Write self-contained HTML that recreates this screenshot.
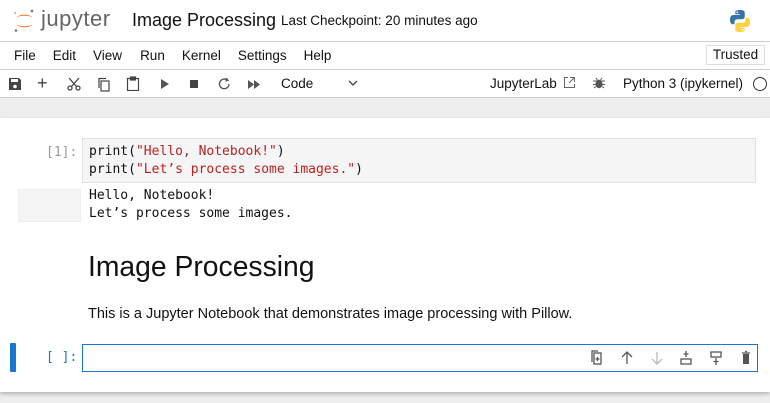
<!DOCTYPE html>
<html><head><style>
*{margin:0;padding:0;box-sizing:border-box}
body{width:770px;height:403px;overflow:hidden;background:#eee;font-family:"Liberation Sans",sans-serif;color:#111;position:relative}
.abs{position:absolute}
.mono{font-family:"DejaVu Sans Mono","Liberation Mono",monospace;font-size:13px}
.ic{position:absolute;top:77px}
</style></head><body>
<div class="abs" style="left:0;top:0;width:770px;height:97px;background:#fff"></div>
<svg class="abs" style="left:12px;top:8px" width="26" height="26" viewBox="0 0 26 26">
<path d="M4 10 A9.5 6 0 0 1 21 10 A9.5 4 0 0 0 4 10Z" fill="#f37726"/>
<path d="M4 16 A9.5 6 0 0 0 21 16 A9.5 4 0 0 1 4 16Z" fill="#f37726"/>
<circle cx="20" cy="3" r="1.3" fill="#767677"/><circle cx="4" cy="22.5" r="1.3" fill="#767677"/><circle cx="3" cy="5" r="0.8" fill="#767677"/>
</svg>
<div class="abs" style="left:41px;top:6px;font-size:22px;color:#666;letter-spacing:0.5px">jupyter</div>
<div class="abs" style="left:132px;top:10px;font-size:18px">Image Processing</div>
<div class="abs" style="left:281px;top:13px;font-size:13.5px">Last Checkpoint: 20 minutes ago</div>
<svg class="abs" style="left:728px;top:9px" width="24" height="24" viewBox="0 0 24 24">
<path d="M11.8 1C7 1 7.3 3 7.3 3v2.3h4.7V6H5.3S2 5.7 2 10.6s2.8 4.7 2.8 4.7h1.7v-2.3s-.1-2.8 2.8-2.8h4.7s2.7 0 2.7-2.6V3.3S17.1 1 11.8 1z" fill="#3873a8"/>
<path d="M12.2 23c4.8 0 4.5-2 4.5-2v-2.3H12V18h6.7s3.3.3 3.3-4.6-2.8-4.7-2.8-4.7h-1.7V11s.1 2.8-2.8 2.8H10s-2.7 0-2.7 2.6v4.3S6.9 23 12.2 23z" fill="#fdd240"/>
<circle cx="9.3" cy="3.4" r=".9" fill="#fff"/><circle cx="14.7" cy="20.6" r=".9" fill="#fff"/>
</svg>
<div class="abs" style="left:0;top:41px;width:770px;height:1px;background:#ccc"></div>
<div class="abs" style="left:14px;top:48px;font-size:13.5px;word-spacing:0"><span style="margin-right:17px">File</span><span style="margin-right:17px">Edit</span><span style="margin-right:18px">View</span><span style="margin-right:17px">Run</span><span style="margin-right:17px">Kernel</span><span style="margin-right:17px">Settings</span><span>Help</span></div>
<div class="abs" style="left:706px;top:45px;width:59px;height:20px;border:1px solid #ddd;font-size:13.5px;text-align:center;line-height:18px">Trusted</div>
<div class="abs" style="left:0;top:69px;width:770px;height:1px;background:#ccc"></div>
<svg class="ic" style="left:8px" width="14" height="14" viewBox="0 0 14 14"><path d="M1 1h10l2 2v10H1z" fill="#444"/><rect x="3" y="2" width="7" height="3" fill="#fff"/><circle cx="7" cy="9.5" r="1.8" fill="#fff"/></svg>
<div class="abs" style="left:37px;top:73px;font-size:18px;color:#444">+</div>
<svg class="ic" style="left:67px" width="14" height="14" viewBox="0 0 14 14" fill="none" stroke="#444" stroke-width="1.3"><circle cx="3" cy="11" r="2"/><circle cx="11" cy="11" r="2"/><path d="M4.5 9.5L12 1M9.5 9.5L2 1"/></svg>
<svg class="ic" style="left:97px" width="14" height="15" viewBox="0 0 14 15" fill="none" stroke="#444" stroke-width="1.2"><rect x="4" y="4" width="8" height="10"/><path d="M2 11V1.5h7"/></svg>
<svg class="ic" style="left:126px;top:76px" width="14" height="15" viewBox="0 0 14 15" fill="none" stroke="#444" stroke-width="1.2"><rect x="1.5" y="2.5" width="11" height="12"/><rect x="4.5" y="1" width="5" height="3" fill="#444"/></svg>
<svg class="ic" style="left:160px;top:79px" width="10" height="10"><path d="M1 0L9 5L1 10Z" fill="#555"/></svg>
<div class="abs" style="left:190px;top:80px;width:8px;height:8px;background:#444"></div>
<svg class="ic" style="left:218px;top:77px" width="13" height="14" viewBox="0 0 13 14" fill="none" stroke="#555" stroke-width="1.3"><path d="M11 7A4.8 4.8 0 1 1 9 3"/><path d="M8 1l2 2.2-2.5 1" /></svg>
<svg class="ic" style="left:248px;top:80px" width="12" height="9"><path d="M0 0L6 4.5L0 9ZM6 0L12 4.5L6 9Z" fill="#555"/></svg>
<div class="abs" style="left:281px;top:76px;font-size:13.5px">Code</div>
<svg class="abs" style="left:348px;top:80px" width="10" height="7"><path d="M1 1l4 4 4-4" fill="none" stroke="#444" stroke-width="1.3"/></svg>
<div class="abs" style="left:490px;top:76px;font-size:13.5px">JupyterLab</div>
<svg class="abs" style="left:563px;top:76px" width="13" height="13" fill="none" stroke="#666" stroke-width="1"><path d="M5 1.5H1.5v10h10V8M7 1.5h4.5V6M11.5 1.5L6 7"/></svg>
<svg class="abs" style="left:593px;top:77px" width="12" height="12" viewBox="0 0 12 12"><ellipse cx="6" cy="7" rx="3.5" ry="4.2" fill="#555"/><path d="M0 4h12M0 7.5h12M1 11l2-1.5M11 11l-2-1.5M3 1l1.5 2M9 1L7.5 3" stroke="#555"/></svg>
<div class="abs" style="left:623px;top:76px;font-size:13.5px">Python 3 (ipykernel)</div>
<div class="abs" style="left:753px;top:77px;width:14px;height:14px;border:1.3px solid #333;border-radius:50%"></div>
<div class="abs" style="left:0;top:97px;width:770px;height:1px;background:#ccc"></div>
<div class="abs" style="left:0;top:118px;width:770px;height:274px;background:#fff;box-shadow:0 2px 4px rgba(0,0,0,.25)"></div>
<div class="abs mono" style="left:46px;top:145px;color:#999">[1]:</div>
<div class="abs" style="left:82px;top:138px;width:674px;height:45px;background:#f5f5f5;border:1px solid #e0e0e0"></div>
<div class="abs mono" style="left:89px;top:143px;line-height:18px;color:#111">print(<span style="color:#ba2121">"Hello, Notebook!"</span>)<br>print(<span style="color:#ba2121">"Let’s process some images."</span>)</div>
<div class="abs" style="left:18px;top:189px;width:63px;height:33px;background:#f5f5f5;border:1px solid #eee"></div>
<div class="abs mono" style="left:89px;top:187px;line-height:18px">Hello, Notebook!<br>Let’s process some images.</div>
<div class="abs" style="left:88px;top:250px;font-size:28.3px">Image Processing</div>
<div class="abs" style="left:88px;top:306px;font-size:14.5px">This is a Jupyter Notebook that demonstrates image processing with Pillow.</div>
<div class="abs" style="left:10px;top:343px;width:6px;height:29px;background:#1976d2;border-radius:1px"></div>
<div class="abs mono" style="left:46px;top:350px;color:#1976d2">[ ]:</div>
<div class="abs" style="left:82px;top:344px;width:676px;height:28px;border:1px solid #1976d2;background:#fff"></div>
<svg class="abs" style="left:590px;top:350px" width="165" height="16" viewBox="0 0 165 16" fill="none" stroke="#555" stroke-width="1.3">
<rect x="4" y="3" width="7" height="11"/><path d="M2 12V1h6M7.5 7v4M5.5 9h4"/>
<path d="M37 14V2M32 7l5-5 5 5"/>
<path d="M67 2v12M62 9l5 5 5-5" stroke="#bbb"/>
<rect x="91" y="9" width="10" height="5"/><path d="M96 1v6M93.5 4h5"/>
<rect x="121" y="2" width="10" height="5"/><path d="M126 8v7M123.5 11.5h5"/>
<rect x="153" y="4" width="6" height="10" fill="#555" stroke="none"/><path d="M152 3h8M155 1.5h2"/>
</svg>
</body></html>
